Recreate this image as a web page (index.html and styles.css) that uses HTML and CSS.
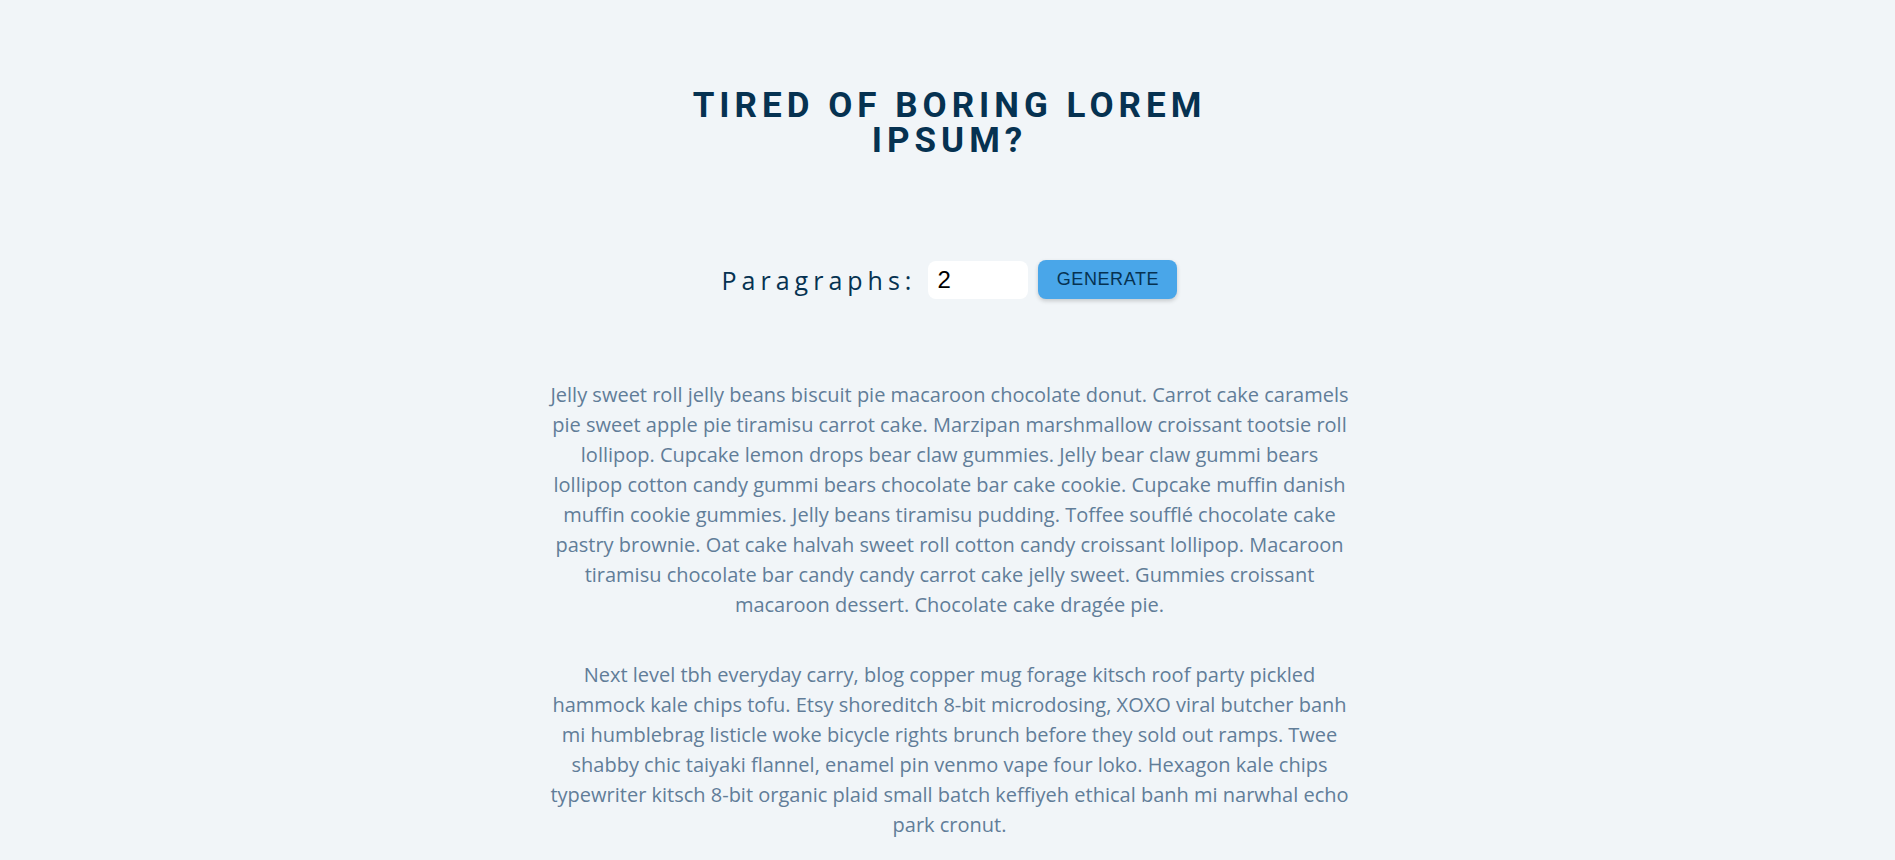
FILE: index.html
```html
<!DOCTYPE html>
<html lang="en">
<head>
<meta charset="utf-8">
<title>Lorem Ipsum Generator</title>
<link rel="stylesheet" href="styles.css">
</head>
<body>
<section class="section-center">
  <h3 class="title">tired of boring lorem ipsum?</h3>
  <form class="lorem-form">
    <label for="amount">paragraphs:</label>
    <input type="number" id="amount" name="amount" value="2">
    <button type="button" class="btn">generate</button>
  </form>
  <article class="lorem-text">
    <p>Jelly sweet roll jelly beans biscuit pie macaroon chocolate donut. Carrot cake caramels pie sweet apple pie tiramisu carrot cake. Marzipan marshmallow croissant tootsie roll lollipop. Cupcake lemon drops bear claw gummies. Jelly bear claw gummi bears lollipop cotton candy gummi bears chocolate bar cake cookie. Cupcake muffin danish muffin cookie gummies. Jelly beans tiramisu pudding. Toffee soufflé chocolate cake pastry brownie. Oat cake halvah sweet roll cotton candy croissant lollipop. Macaroon tiramisu chocolate bar candy candy carrot cake jelly sweet. Gummies croissant macaroon dessert. Chocolate cake dragée pie.</p>
    <p>Next level tbh everyday carry, blog copper mug forage kitsch roof party pickled hammock kale chips tofu. Etsy shoreditch 8-bit microdosing, XOXO viral butcher banh mi humblebrag listicle woke bicycle rights brunch before they sold out ramps. Twee shabby chic taiyaki flannel, enamel pin venmo vape four loko. Hexagon kale chips typewriter kitsch 8-bit organic plaid small batch keffiyeh ethical banh mi narwhal echo park cronut.</p>
  </article>
</section>
</body>
</html>
```

FILE: styles.css
```css
* {
  box-sizing: border-box;
}

body {
  margin: 0;
  background: #f1f5f8;
  font-family: "Open Sans", "DejaVu Sans", sans-serif;
}

.section-center {
  padding: 88px 0 0 4px;
  display: flex;
  flex-direction: column;
  align-items: center;
}

.title {
  width: 640px;
  margin: 0;
  text-align: center;
  font-family: Roboto, "Liberation Sans", sans-serif;
  font-weight: 700;
  font-size: 35px;
  line-height: 35px;
  letter-spacing: 5px;
  text-transform: uppercase;
  color: #063251;
}

.lorem-form {
  margin: 102px 0 0;
  display: flex;
  align-items: center;
  justify-content: center;
  height: 39px;
}

.lorem-form label {
  font-family: "Open Sans", sans-serif;
  font-size: 25px;
  letter-spacing: 5px;
  text-transform: capitalize;
  color: #063251;
}

.lorem-form input {
  width: 100px;
  height: 38px;
  margin: 0 10px 0 12px;
  padding: 0 9px;
  border: none;
  border-radius: 8px;
  background: #fff;
  font-family: "Liberation Sans", Arial, sans-serif;
  font-size: 24px;
  color: #000;
  outline: none;
}

.btn {
  width: 139px;
  height: 39px;
  padding: 0;
  border: none;
  border-radius: 8px;
  background: #49a6e9;
  color: #063251;
  font-family: "Liberation Sans", Arial, sans-serif;
  font-size: 18px;
  letter-spacing: 0.6px;
  text-transform: uppercase;
  box-shadow: 0 2px 4px rgba(0, 0, 0, 0.18);
  cursor: pointer;
}

.lorem-text {
  width: 800px;
  margin-top: 81px;
  text-align: center;
}

.lorem-text p {
  margin: 0 0 40px;
  font-size: 20px;
  line-height: 30px;
  color: #617d98;
}
```
